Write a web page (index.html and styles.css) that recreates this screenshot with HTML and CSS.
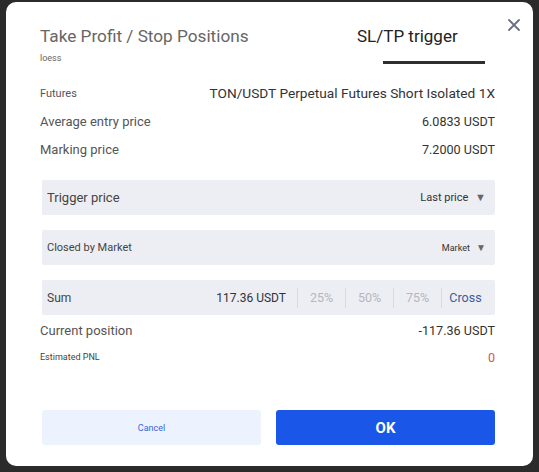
FILE: index.html
```html
<!DOCTYPE html>
<html lang="en">
<head>
    <meta charset="UTF-8">
    <meta name="viewport" content="width=device-width, initial-scale=1.0">
    <title>SL/TP trigger</title>
    <link rel="stylesheet" href="styles.css">
</head>
<body>
    <div class="modal">
        <button class="close" aria-label="Close">
            <svg width="12" height="12" viewBox="0 0 12 12"><path d="M1 1 L11 11 M11 1 L1 11" stroke="#6b7080" stroke-width="1.8" stroke-linecap="round"/></svg>
        </button>

        <div class="head">
            <div class="head-title">
                <h2>Take Profit / Stop Positions</h2>
                <div class="sub">loess</div>
            </div>
            <div class="tab">
                <span>SL/TP trigger</span>
                <i class="tab-bar"></i>
            </div>
        </div>

        <div class="row">
            <span class="label small">Futures</span>
            <span class="value big">TON/USDT Perpetual Futures Short Isolated 1X</span>
        </div>
        <div class="row">
            <span class="label">Average entry price</span>
            <span class="value">6.0833 USDT</span>
        </div>
        <div class="row">
            <span class="label">Marking price</span>
            <span class="value">7.2000 USDT</span>
        </div>

        <div class="box first">
            <span class="box-label">Trigger price</span>
            <span class="select">Last price <b class="caret">▼</b></span>
        </div>
        <div class="box">
            <span class="box-label tiny">Closed by Market</span>
            <span class="select mini">Market <b class="caret">▼</b></span>
        </div>
        <div class="box sum">
            <span class="box-label sum-label">Sum</span>
            <span class="amount">117.36 USDT</span>
            <span class="pct">25%</span>
            <span class="pct">50%</span>
            <span class="pct">75%</span>
            <span class="pct cross">Cross</span>
        </div>

        <div class="row row-pos">
            <span class="label">Current position</span>
            <span class="value">-117.36 USDT</span>
        </div>
        <div class="row row-pnl">
            <span class="label micro">Estimated PNL</span>
            <span class="value red">0</span>
        </div>

        <div class="actions">
            <button class="btn btn-cancel">Cancel</button>
            <button class="btn btn-ok">OK</button>
        </div>
    </div>
</body>
</html>
```
FILE: styles.css
```css
body {
    margin: 0;
    background: #2b2b2b;
    font-family: Roboto, "Liberation Sans", Arial, sans-serif;
    height: 472px;
    overflow: hidden;
}
.modal {
    position: relative;
    box-sizing: border-box;
    width: 527px;
    height: 464px;
    margin: 2px 0 0 6px;
    padding: 0 38px 0 34px;
    background: #fff;
    border-radius: 10px;
}
.close {
    position: absolute;
    top: 17px;
    right: 13px;
    padding: 0;
    border: none;
    background: none;
    line-height: 0;
    cursor: pointer;
}
.head {
    display: flex;
    height: 77px;
}
.head-title {
    flex: 1;
    padding-top: 24px;
}
.head-title h2 {
    margin: 0;
    font-size: 17.2px;
    font-weight: 400;
    color: #666;
    line-height: 21px;
}
.sub {
    margin-top: 6px;
    font-size: 9px;
    color: #666;
}
.tab {
    width: 138px;
    padding-top: 24px;
}
.tab span {
    display: block;
    font-size: 17px;
    color: #222;
    line-height: 21px;
}
.tab-bar {
    display: block;
    width: 102px;
    height: 3px;
    margin: 14px 0 0 26px;
    background: #2e2e2e;
}
.row {
    display: flex;
    justify-content: space-between;
    align-items: center;
    height: 28px;
}
.label {
    font-size: 13px;
    color: #555;
}
.label.small {
    font-size: 11px;
}
.label.micro {
    font-size: 9px;
    color: #444;
}
.value {
    font-size: 12.6px;
    color: #333;
}
.value.big {
    font-size: 13.7px;
}
.red {
    color: #d9534f;
}
.box {
    display: flex;
    align-items: center;
    height: 35px;
    margin: 15px 0 0 2px;
    padding: 0 9px 0 5px;
    background: #eceef3;
    border-radius: 2px;
}
.box.first {
    margin-top: 17px;
}
.box-label {
    flex: 1;
    font-size: 13px;
    color: #444;
}
.box-label.tiny {
    font-size: 11px;
}
.select {
    font-size: 11px;
    color: #333;
}
.select.mini {
    font-size: 9px;
}
.caret {
    margin-left: 4px;
    font-weight: 400;
    font-size: 11px;
    color: #666;
}
.select.mini .caret {
    font-size: 10px;
}
.sum {
    padding-right: 6px;
}
.sum-label {
    font-size: 12px;
}
.amount {
    padding-right: 11px;
    font-size: 12px;
    color: #333;
}
.pct {
    width: 47px;
    border-left: 1px solid #d9dbe1;
    line-height: 20px;
    text-align: center;
    font-size: 12.5px;
    color: #b4b7bf;
}
.pct.cross {
    color: #3d5a96;
}
.row-pos {
    height: 28px;
    margin-top: 1px;
}
.row-pnl {
    height: 26px;
}
.actions {
    display: flex;
    gap: 15px;
    margin: 40px 0 0 2px;
}
.btn {
    flex: 1;
    height: 35px;
    border: none;
    border-radius: 3px;
    font-family: inherit;
    cursor: pointer;
}
.btn-cancel {
    background: #edf3fe;
    color: #3b63d6;
    font-size: 9px;
}
.btn-ok {
    background: #1a56e8;
    color: #fff;
    font-size: 15px;
    font-weight: 700;
}
```
